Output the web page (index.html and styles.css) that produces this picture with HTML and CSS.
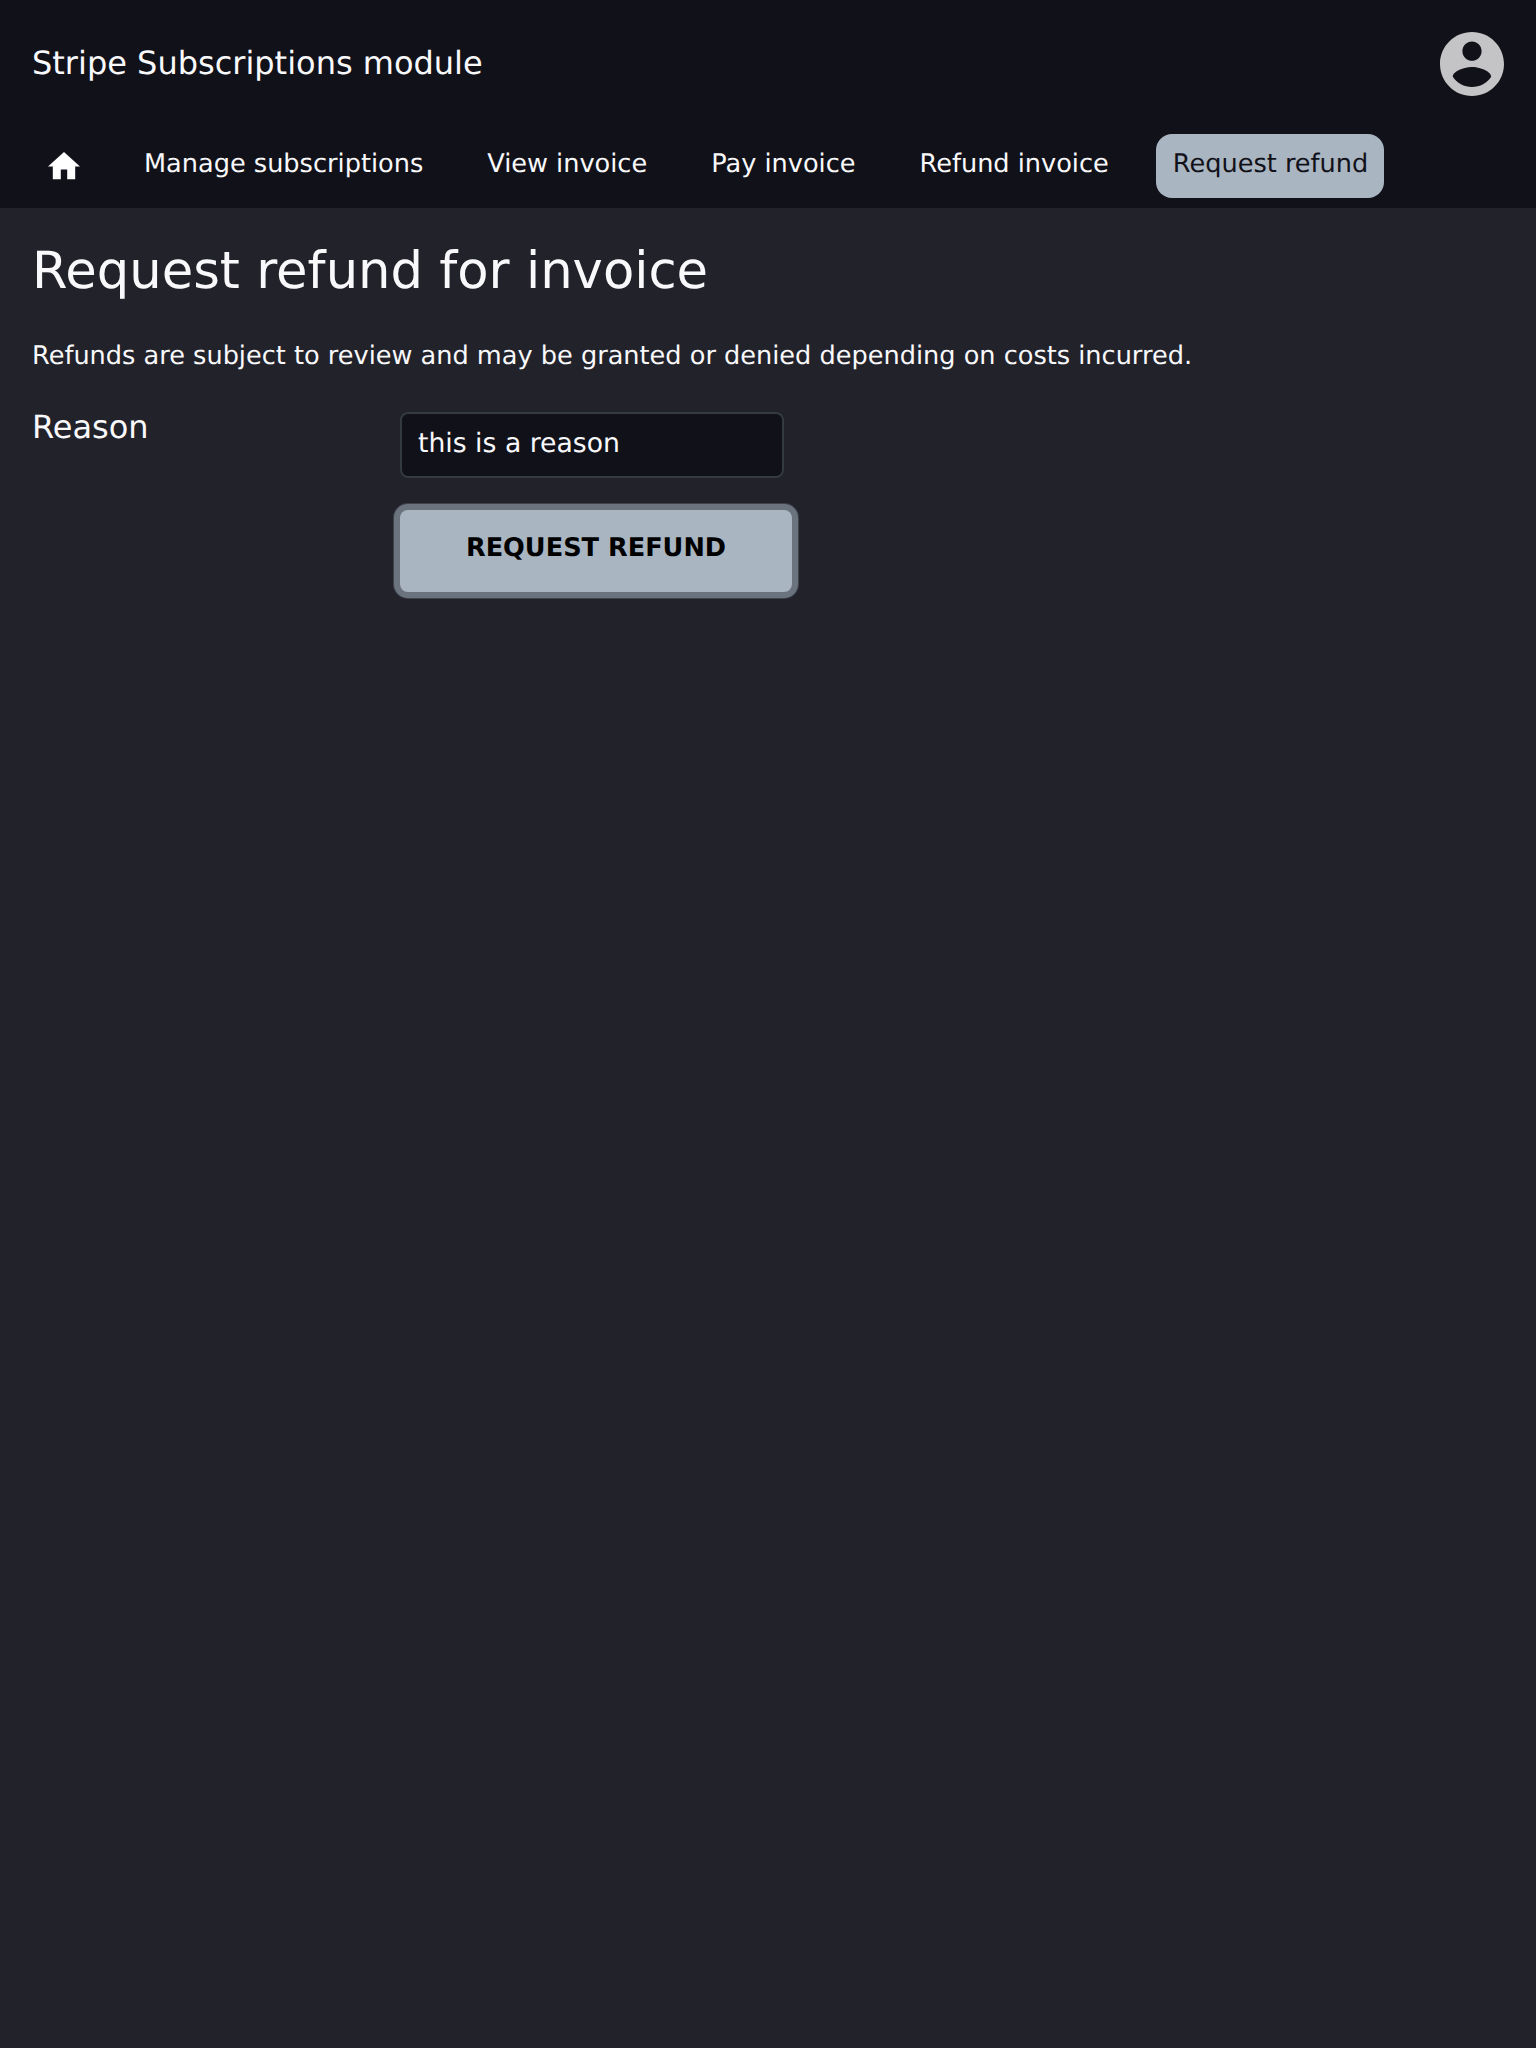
FILE: index.html
```html
<!DOCTYPE html>
<html lang="en">
<head>
<meta charset="utf-8">
<title>Request refund</title>
<link rel="stylesheet" href="styles.css">
</head>
<body>
<header class="header">
  <div class="titlebar">
    <span class="title">Stripe Subscriptions module</span>
    <svg class="avatar" viewBox="2 2 20 20"><path d="M12 2C6.48 2 2 6.48 2 12s4.48 10 10 10 10-4.48 10-10S17.52 2 12 2zm0 3c1.66 0 3 1.34 3 3s-1.34 3-3 3-3-1.34-3-3 1.34-3 3-3zm0 14.2c-2.5 0-4.71-1.28-6-3.22.03-1.99 4-3.08 6-3.08 1.99 0 5.97 1.09 6 3.08-1.29 1.94-3.5 3.22-6 3.22z"/></svg>
  </div>
  <nav class="nav">
    <a class="home"><svg class="home-icon" viewBox="2 3 20 17"><path d="M10 20v-6h4v6h5v-8h3L12 3 2 12h3v8z"/></svg></a>
    <a class="item">Manage subscriptions</a>
    <a class="item">View invoice</a>
    <a class="item">Pay invoice</a>
    <a class="item">Refund invoice</a>
    <a class="item active">Request refund</a>
  </nav>
</header>
<main class="main">
  <h1 class="heading">Request refund for invoice</h1>
  <p class="note">Refunds are subject to review and may be granted or denied depending on costs incurred.</p>
  <form class="form">
    <label class="label" for="reason">Reason</label>
    <div class="fields">
      <input class="input" id="reason" type="text" value="this is a reason">
      <button class="button" type="button">REQUEST REFUND</button>
    </div>
  </form>
</main>
</body>
</html>
```
FILE: styles.css
```css
* { box-sizing: border-box; }
body {
  margin: 0;
  min-height: 100vh;
  background: #22222b;
  color: #f9f9fb;
  font-family: "DejaVu Sans", sans-serif;
  font-size: 25.6px;
  text-rendering: geometricPrecision;
}
.header { height: 208px; background: #11111a; }
.titlebar {
  display: flex;
  justify-content: space-between;
  align-items: center;
  height: 128px;
  padding: 0 32px;
}
.title { padding-bottom: 2px; font-size: 32px; line-height: 40px; }
.avatar { width: 64px; height: 64px; fill: #c4c4c6; }
.nav { display: flex; gap: 32px; padding: 6px 32px 0; }
.home { display: flex; width: 64px; padding: 18.4px 0 0 16px; }
.home-icon { width: 32px; height: 27.2px; fill: #fff; }
.item {
  height: 64px;
  padding: 0 16px;
  border-radius: 16px;
  line-height: 60px;
  white-space: nowrap;
}
.active {
  margin-left: -0.8px;
  padding-left: 16.8px;
  background: #a9b5c0;
  color: #11111a;
}
.main { padding: 33px 32px; }
.heading { margin: 0; font-size: 51.2px; font-weight: 400; line-height: 60px; }
.note { margin: 38px 0 0; line-height: 34px; }
.form { display: flex; margin-top: 39px; }
.label { width: 368px; font-size: 32px; line-height: 30px; }
.fields { display: flex; flex-direction: column; gap: 32px; }
.input {
  width: 384px;
  height: 66px;
  padding: 0 16px 4px;
  border: 2px solid #343a42;
  border-radius: 8px;
  background: #11111a;
  color: #f9f9fb;
  font: inherit;
  font-size: 26.667px;
  text-rendering: inherit;
}
.button {
  width: 392px;
  height: 82px;
  padding: 0 0 6px;
  border: 0;
  border-radius: 8px;
  box-shadow: 0 0 0 6px #6b747e, 0 0 0 7px #3f434c;
  background: #a9b5c0;
  color: #000;
  font: 700 25.6px "DejaVu Sans", sans-serif;
  text-rendering: inherit;
}
```
